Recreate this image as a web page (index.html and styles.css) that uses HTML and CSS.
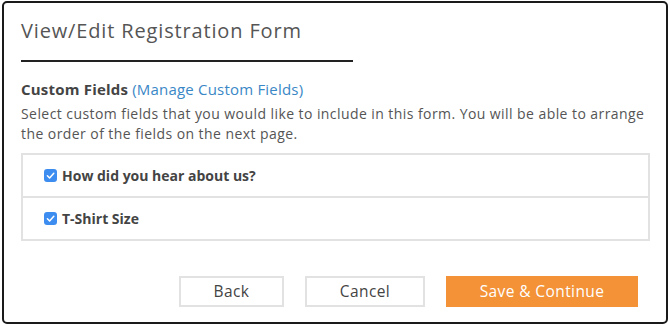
FILE: index.html
```html
<!DOCTYPE html>
<html>
<head>
<meta charset="utf-8">
<link rel="stylesheet" href="styles.css">
</head>
<body>
<div class="modal">
  <div class="head">
    <h1 class="title">View/Edit Registration Form</h1>
  </div>
  <div class="section">
    <div class="section-title"><strong>Custom Fields</strong> <a class="link">(Manage Custom Fields)</a></div>
    <p class="desc">Select custom fields that you would like to include in this form. You will be able to arrange the order of the fields on the next page.</p>
    <div class="fields">
      <label class="field"><span class="check"><svg viewBox="0 0 13 13" width="13" height="13"><path d="M3.4 6.8 L5.6 9 L9.8 4.2" fill="none" stroke="#fff" stroke-width="1.5" stroke-linecap="round" stroke-linejoin="round"/></svg></span>How did you hear about us?</label>
      <label class="field"><span class="check"><svg viewBox="0 0 13 13" width="13" height="13"><path d="M3.4 6.8 L5.6 9 L9.8 4.2" fill="none" stroke="#fff" stroke-width="1.5" stroke-linecap="round" stroke-linejoin="round"/></svg></span>T-Shirt Size</label>
    </div>
  </div>
  <div class="actions">
    <button class="btn">Back</button>
    <button class="btn">Cancel</button>
    <button class="btn primary">Save &amp; Continue</button>
  </div>
</div>
</body>
</html>
```
FILE: styles.css
```css
html, body { margin: 0; padding: 0; background: #fff; }
body { font-family: "Open Sans", Lato, sans-serif; color: #555; }
.modal {
  box-sizing: border-box;
  margin: 1px 2px 0 2px;
  width: 666px;
  height: 323px;
  border: 2px solid #1a1a1a;
  border-radius: 5px;
  padding: 0 17px;
  display: flex;
  flex-direction: column;
}
.head { padding-top: 15px; }
.title {
  margin: 0;
  width: 332px;
  font-weight: 400;
  font-size: 20px;
  letter-spacing: 0.85px;
  line-height: 26px;
  color: #555;
  padding-bottom: 16px;
  border-bottom: 2px solid #222;
}
.section { padding-top: 18px; }
.section-title { font-size: 15px; letter-spacing: 0.2px; line-height: 19px; color: #444; }
.section-title strong { font-weight: 700; }
.link { color: #3a87c6; }
.desc { margin: 5px 0 0; font-size: 14px; letter-spacing: 0.43px; line-height: 19.5px; color: #555; }
.fields {
  margin-top: 10px;
  width: 629px;
  box-sizing: border-box;
  border: 2px solid #e2e2e2;
}
.field {
  display: flex;
  align-items: center;
  height: 41px;
  padding-left: 21px;
  font-size: 14px;
  font-weight: 700;
  color: #444;
}
.field + .field { border-top: 2px solid #e2e2e2; }
.check {
  width: 13px; height: 13px;
  border-radius: 3px;
  background: #3d8df0;
  margin-right: 5px;
  display: inline-flex;
}
.actions {
  display: flex;
  justify-content: flex-end;
  gap: 21px;
  margin-top: auto;
  margin-bottom: 15px;
  padding-right: 11px;
}
.btn {
  height: 31px;
  box-sizing: border-box;
  border: 2px solid #e2e2e2;
  background: #fff;
  font-family: inherit;
  font-size: 15.5px;
  letter-spacing: 0.4px;
  color: #444;
  padding: 0 0 2px;
}
.btn:nth-child(1) { width: 105px; }
.btn:nth-child(2) { width: 120px; }
.btn.primary {
  width: 192px;
  background: #f39237;
  border-color: #f39237;
  color: #fff;
}
```
